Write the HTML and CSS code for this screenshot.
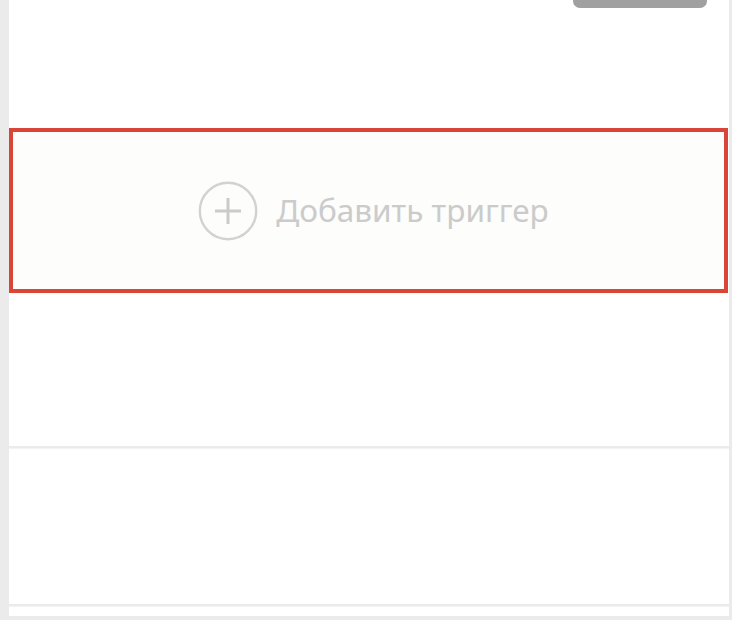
FILE: index.html
```html
<!DOCTYPE html>
<html lang="ru">
<head>
<meta charset="utf-8">
<link rel="stylesheet" href="styles.css">
</head>
<body>
<div class="page">
  <section class="card card-main">
    <div class="top-area">
      <div class="top-button"></div>
    </div>
    <div class="trigger-box">
      <svg class="plus-icon" width="60" height="60" viewBox="0 0 60 60" aria-hidden="true">
        <circle cx="30" cy="30" r="28.2" fill="none" stroke="#d2d2d2" stroke-width="2.4"/>
        <path d="M30 17 V43 M17 30 H43" stroke="#cbcbcb" stroke-width="3" fill="none"/>
      </svg>
      <span class="trigger-label">Добавить триггер</span>
    </div>
    <div class="after-area"></div>
  </section>
  <section class="card card-second"></section>
  <section class="card card-third"></section>
</div>
</body>
</html>
```

FILE: styles.css
```css
html, body {
  margin: 0;
  padding: 0;
  background: #ebebeb;
}
body {
  font-family: "Noto Sans", "Open Sans", sans-serif;
}
.page {
  padding: 0 3px 4px 9px;
  display: flex;
  flex-direction: column;
  gap: 2px;
  height: 620px;
  box-sizing: border-box;
}
.card {
  background: #ffffff;
}
.card-main {
  height: 446px;
  display: flex;
  flex-direction: column;
}
.top-area {
  height: 128px;
  display: flex;
  justify-content: flex-end;
  align-items: flex-start;
}
.top-button {
  width: 134px;
  height: 8px;
  margin-right: 22px;
  background: #a0a0a0;
  border-radius: 0 0 7px 7px;
}
.trigger-box {
  height: 165px;
  box-sizing: border-box;
  border: 4px solid #d94637;
  margin-right: 1px;
  background: #fdfdfc;
  display: flex;
  align-items: center;
  justify-content: center;
  gap: 18px;
  padding-left: 10px;
}
.plus-icon {
  display: block;
  flex: none;
}
.trigger-label {
  font-size: 31.5px;
  color: #cbcbcb;
  line-height: 1;
  padding-bottom: 2px;
}
.after-area {
  flex: 1;
}
.card-second {
  height: 156px;
  border-top: 1px solid #f3f3f3;
  box-sizing: border-box;
}
.card-third {
  height: 10px;
  border-top: 1px solid #f3f3f3;
  box-sizing: border-box;
}
```
